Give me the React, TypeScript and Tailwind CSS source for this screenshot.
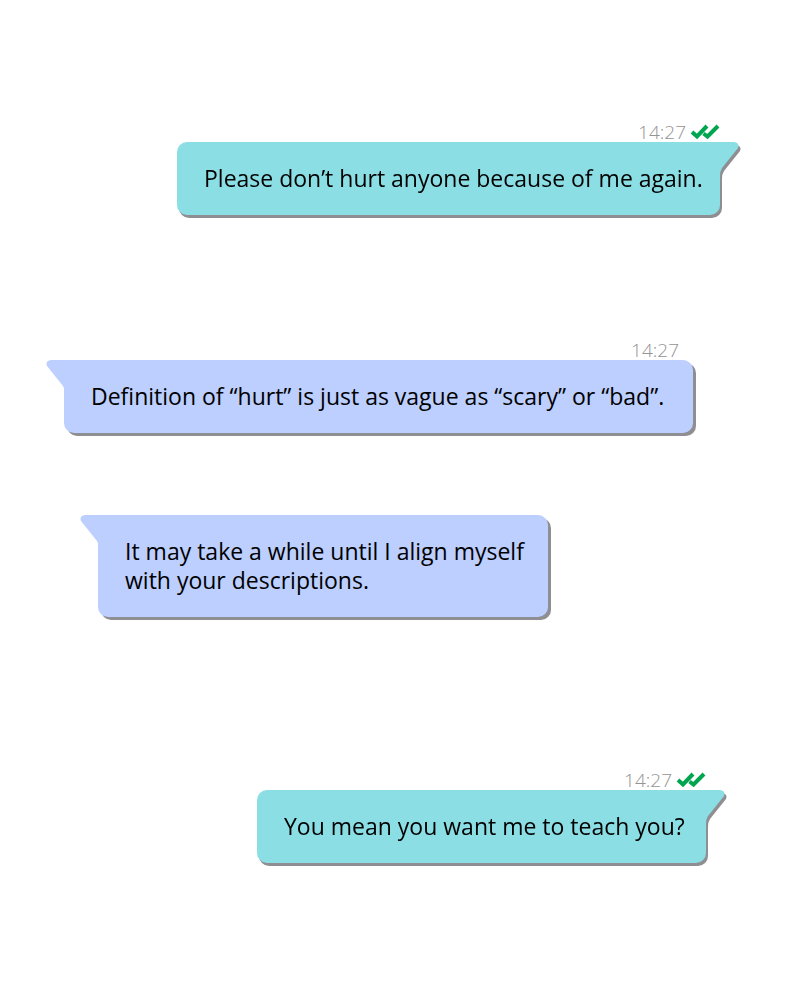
import type { ReactNode } from "react";

function DoubleCheck() {
  return (
    <svg width="30" height="16" viewBox="0 0 30 16" fill="none" stroke="#00a550" strokeWidth="4" role="img" aria-label="Read">
      <path d="M2 8 L7 12.5 L17 2" />
      <path d="M13.5 9.5 L17.5 12.5 L28 2" />
    </svg>
  );
}

type MessageProps = {
  side: "sent" | "received";
  className: string;
  time?: string;
  children: ReactNode;
};

function Message({ side, className, time, children }: MessageProps) {
  const sent = side === "sent";
  return (
    <article className={`max-w-full ${className}`}>
      {time && (
        <div className={`flex h-5 items-center justify-end gap-1 text-[19px] leading-5 font-light text-[#949494] ${sent ? "" : "pr-[14px]"}`}>
          <time dateTime={time}>{time}</time>
          {sent && <DoubleCheck />}
        </div>
      )}
      <div
        className={`relative rounded-[10px] py-[22px] pr-4 pl-[27px] ${
          sent
            ? "rounded-tr-none bg-[#8adee4] drop-shadow-[2px_3px_0_#8f8f93]"
            : "rounded-tl-none bg-[#bccfff] shadow-[3px_3px_0_#8f8f93]"
        }`}
      >
        <svg
          width="36"
          height="36"
          viewBox="0 0 36 36"
          aria-hidden="true"
          className={`absolute top-0 ${sent ? "-right-[19px] fill-[#8adee4]" : "-left-[18px] -scale-x-100 fill-[#bccfff]"}`}
        >
          <path d="M0 0 H31 Q37 1 35 6 L19 26 Q17 29 17 34 H0 Z" />
        </svg>
        <p className="relative text-[23px] leading-[29px] text-black">{children}</p>
      </div>
    </article>
  );
}

export default function App() {
  return (
    <main className="flex min-h-screen flex-col bg-white pt-[122px] pb-[136px] font-['Open_Sans',sans-serif]">
      <Message side="sent" time="14:27" className="mr-20 w-[543px] self-end">
        Please don’t hurt anyone because of me again.
      </Message>
      <Message side="received" time="14:27" className="mt-[125px] ml-16 w-[629px] self-start">
        Definition of “hurt” is just as vague as “scary” or “bad”.
      </Message>
      <Message side="received" className="mt-[82px] ml-[98px] w-[450px] self-start">
        It may take a while until I align myself with your descriptions.
      </Message>
      <Message side="sent" time="14:27" className="mt-[153px] mr-[94px] w-[449px] self-end">
        You mean you want me to teach you?
      </Message>
    </main>
  );
}
